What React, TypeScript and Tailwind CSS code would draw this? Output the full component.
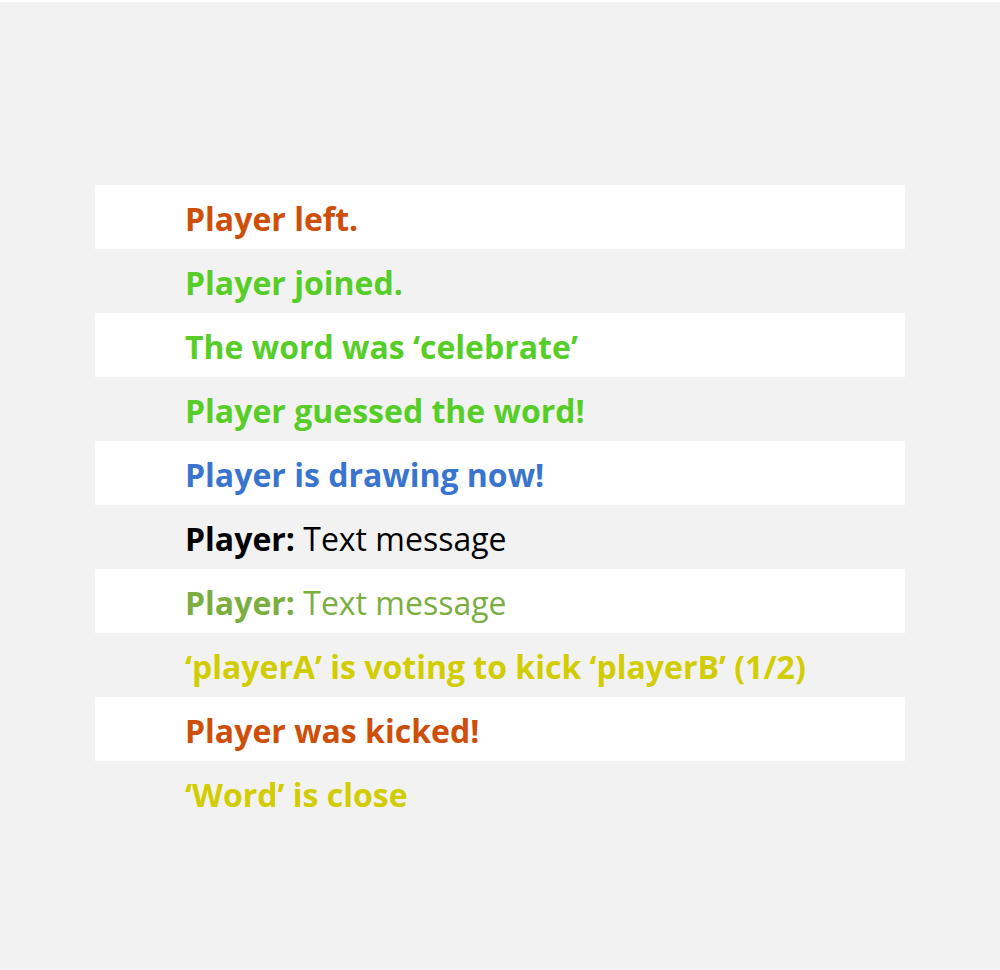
const ROWS: { content: React.ReactNode; cls: string }[] = [
  { content: 'Player left.', cls: 'text-[#ce4f0a] font-bold' },
  { content: 'Player joined.', cls: 'text-[#56ce27] font-bold' },
  { content: 'The word was ‘celebrate’', cls: 'text-[#56ce27] font-bold' },
  { content: 'Player guessed the word!', cls: 'text-[#56ce27] font-bold' },
  { content: 'Player is drawing now!', cls: 'text-[#3975ce] font-bold' },
  {
    content: (
      <>
        <span className="font-bold">Player:</span> Text message
      </>
    ),
    cls: 'text-black',
  },
  {
    content: (
      <>
        <span className="font-bold">Player:</span> Text message
      </>
    ),
    cls: 'text-[#7bad3f]',
  },
  { content: '‘playerA’ is voting to kick ‘playerB’ (1/2)', cls: 'text-[#d2cd00] font-bold' },
  { content: 'Player was kicked!', cls: 'text-[#ce4f0a] font-bold' },
  { content: '‘Word’ is close', cls: 'text-[#d2cd00] font-bold' },
];

export default function App() {
  return (
    <div className="min-h-[970px] bg-[#f2f2f2] border-t-2 border-white pt-[183px] px-[95px] font-['Open_Sans',sans-serif]">
      <div className="flex flex-col">
        {ROWS.map((r, i) => (
          <div
            key={i}
            className={`h-16 flex items-center pl-[90px] pt-[3px] text-[32px] leading-none ${
              i % 2 === 0 ? 'bg-white' : ''
            } ${r.cls}`}
          >
            <span>{r.content}</span>
          </div>
        ))}
      </div>
    </div>
  );
}
